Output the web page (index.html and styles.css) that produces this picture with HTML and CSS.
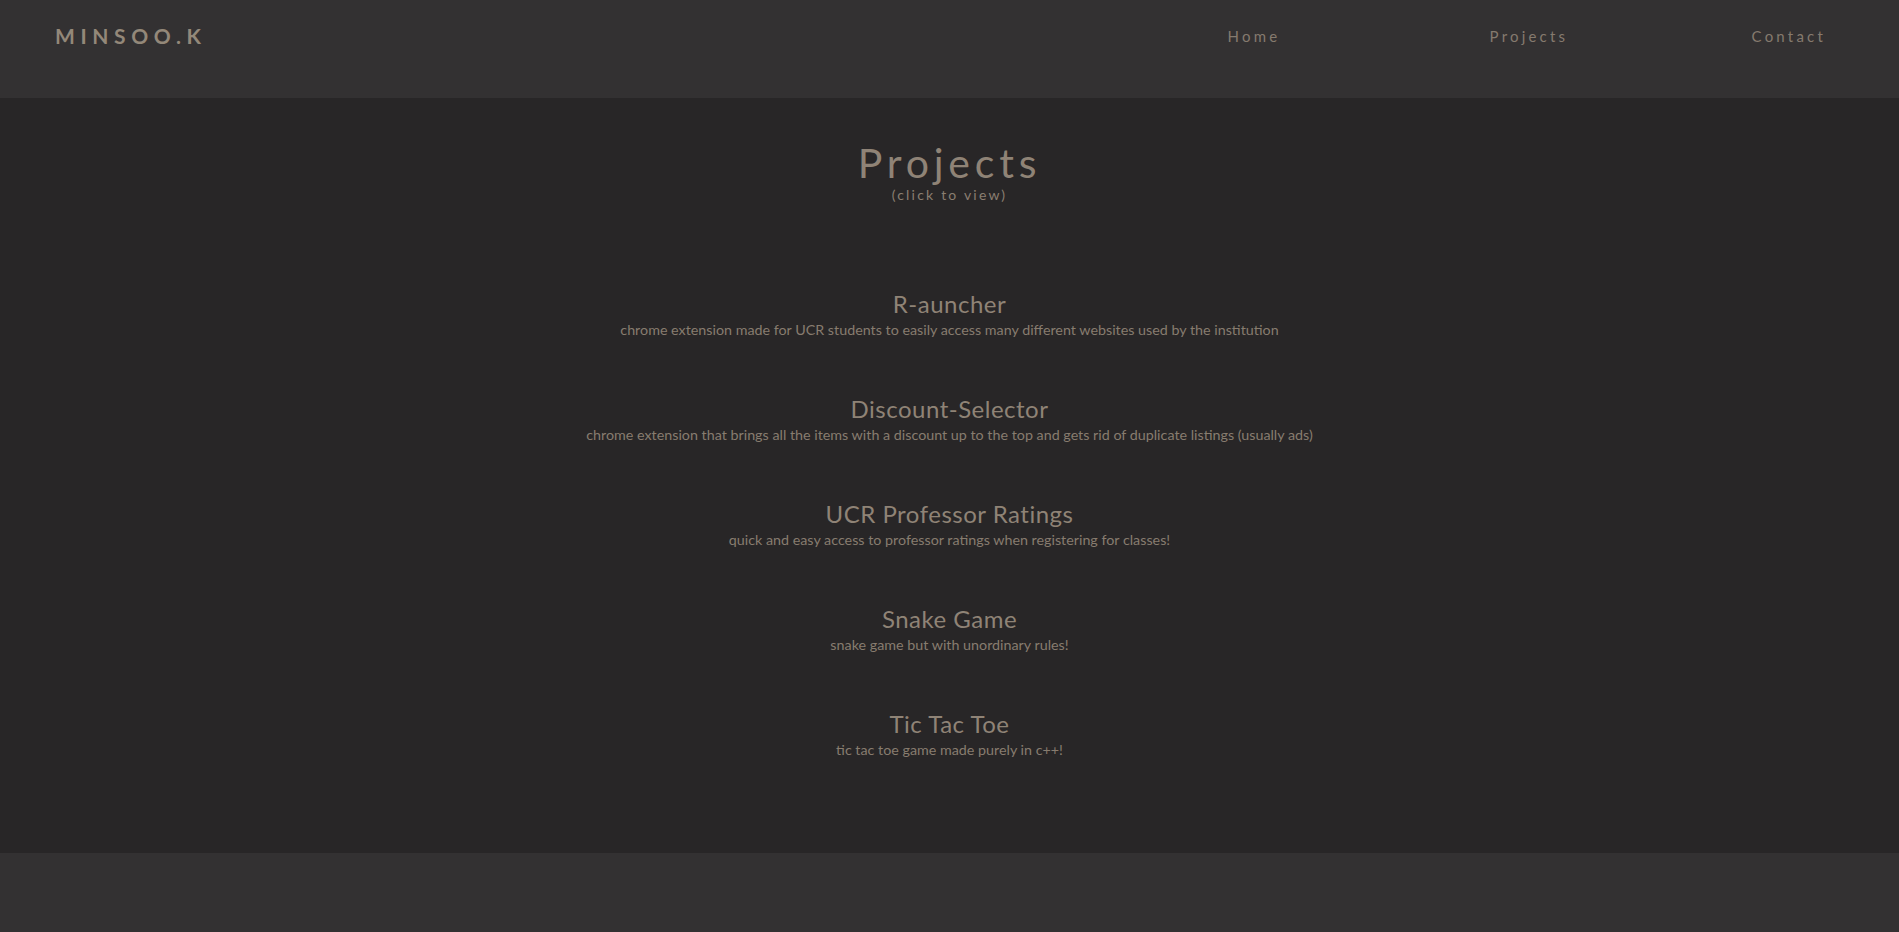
FILE: index.html
```html
<!DOCTYPE html>
<html>
<head>
<meta charset="utf-8">
<title>Minsoo.K - Projects</title>
<link rel="stylesheet" href="styles.css">
</head>
<body>
<header class="site-header">
  <a class="logo" href="#">MINSOO.K</a>
  <nav class="nav">
    <a class="nav-link" href="#">Home</a>
    <a class="nav-link" href="#">Projects</a>
    <a class="nav-link" href="#">Contact</a>
  </nav>
</header>
<main class="main">
  <div class="page-title">
    <h1 class="title">Projects</h1>
    <p class="subtitle">(click to view)</p>
  </div>
  <ul class="projects">
    <li class="project">
      <h2 class="project-name">R-auncher</h2>
      <p class="project-desc">chrome extension made for UCR students to easily access many different websites used by the institution</p>
    </li>
    <li class="project">
      <h2 class="project-name">Discount-Selector</h2>
      <p class="project-desc">chrome extension that brings all the items with a discount up to the top and gets rid of duplicate listings (usually ads)</p>
    </li>
    <li class="project">
      <h2 class="project-name">UCR Professor Ratings</h2>
      <p class="project-desc">quick and easy access to professor ratings when registering for classes!</p>
    </li>
    <li class="project">
      <h2 class="project-name">Snake Game</h2>
      <p class="project-desc">snake game but with unordinary rules!</p>
    </li>
    <li class="project">
      <h2 class="project-name">Tic Tac Toe</h2>
      <p class="project-desc">tic tac toe game made purely in c++!</p>
    </li>
  </ul>
</main>
<footer class="site-footer"></footer>
</body>
</html>
```
FILE: styles.css
```css
* { box-sizing: border-box; }
html, body {
  margin: 0;
  padding: 0;
  background: #333132;
  font-family: "Lato", "DejaVu Sans", sans-serif;
  color: #8a7e71;
}
a { color: inherit; text-decoration: none; }

.site-header {
  height: 98px;
  background: #333132;
  display: flex;
  align-items: flex-start;
  justify-content: space-between;
  padding: 24px 73px 0 55px;
}
.logo {
  font-size: 21px;
  font-weight: 700;
  letter-spacing: 5.6px;
  line-height: 24px;
  color: #938879;
}
.nav {
  display: grid;
  grid-template-columns: 262px 262px auto;
  padding-top: 3px;
}
.nav-link {
  font-size: 15px;
  letter-spacing: 3.2px;
  line-height: 18px;
  color: #857a6e;
}

.main {
  background: #282627;
  height: 755px;
  padding-top: 41px;
}
.page-title {
  text-align: center;
}
.title {
  margin: 0;
  font-weight: 400;
  font-size: 41px;
  letter-spacing: 4.8px;
  line-height: 48px;
  color: #8f8376;
}
.subtitle {
  margin: 0;
  font-size: 14px;
  letter-spacing: 2.2px;
  line-height: 16px;
}

.projects {
  list-style: none;
  margin: 0;
  padding: 0;
  padding-top: 88px;
  display: flex;
  flex-direction: column;
  gap: 56px;
  text-align: center;
}
.project-name {
  margin: 0;
  font-weight: 400;
  font-size: 24px;
  letter-spacing: 0.5px;
  line-height: 26px;
  color: #8f8376;
}
.project-desc {
  margin: 3px 0 0;
  font-size: 14.3px;
  line-height: 20px;
  color: #877c6f;
}

.site-footer {
  height: 79px;
  background: #333132;
}
```
